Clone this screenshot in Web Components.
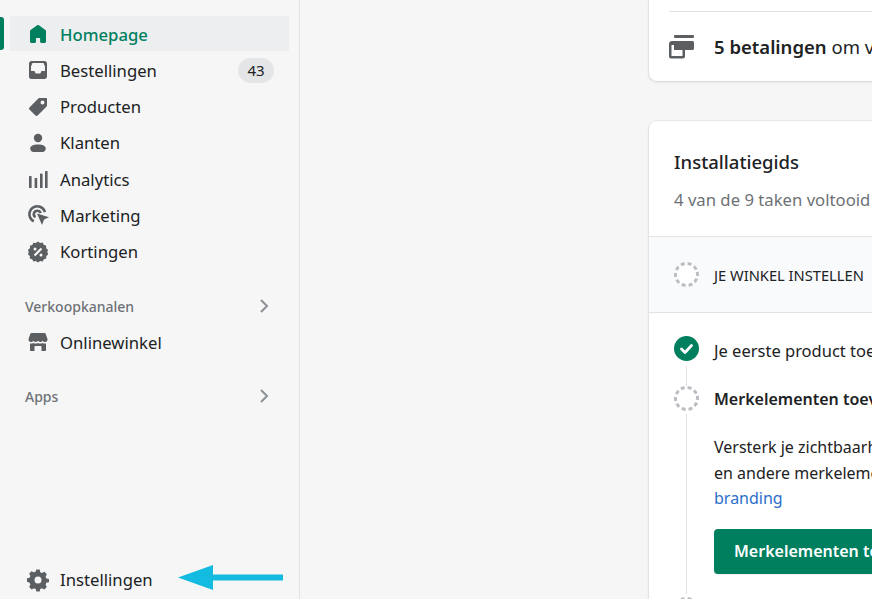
<!DOCTYPE html>
<html lang="nl">
<head>
<meta charset="utf-8">
<title>Homepage</title>
<style>
  html, body { margin: 0; height: 100%; overflow: hidden; }
  body { font-family: "Noto Sans", "Open Sans", sans-serif; color: #202223; background: #f6f6f7; }
</style>
</head>
<body>
<admin-shell>
  <admin-sidebar slot="sidebar"></admin-sidebar>
  <payment-card></payment-card>
  <setup-guide></setup-guide>
</admin-shell>

<script>
const ICONS = {
  home: `<path d="M18 7.3v10.2c0 .8-.7 1.500-1.500 1.500h-2.900c-.8 0-1.500-.7-1.500-1.500V14H8v3.500C8 18.300 7.300 19 6.500 19H3.500C2.700 19 2 18.300 2 17.500V7.300c0-.5.200-.9.600-1.200L9.200 1.300c.5-.4 1.200-.4 1.700 0l6.500 4.800c.4.300.6.700.6 1.200z"/>`,
  orders: `<path fill-rule="evenodd" d="M3.500 1h13C17.900 1 19 2.100 19 3.500v13c0 1.400-1.100 2.500-2.500 2.500h-13A2.500 2.500 0 0 1 1 16.500v-13C1 2.100 2.100 1 3.500 1zM4.500 3 3 6.500V11h3.500l1.200 2.500h4.600l1.200-2.500H17V6.500L15.500 3h-11z"/>`,
  tag: `<path fill-rule="evenodd" d="M18 1h-6.500c-.4 0-.8.200-1.100.4l-9 9c-.5.600-.5 1.500 0 2.100l6.100 6.100c.6.500 1.500.5 2.100 0l9-9c.2-.3.400-.7.400-1.100V2c0-.6-.4-1-1-1zm-3.500 6.500a2 2 0 1 1 0-4 2 2 0 0 1 0 4z"/>`,
  person: `<circle cx="10" cy="5" r="4.200"/><path d="M10 11.500c-4.800 0-7.800 1.500-7.800 4.100 0 1.900 1.400 3.400 3.300 3.400h9c1.900 0 3.300-1.500 3.300-3.400 0-2.600-3-4.100-7.800-4.100z"/>`,
  bars: `<rect x="1" y="7" width="2.600" height="12" rx=".6"/><rect x="6.600" y="9" width="2.600" height="10" rx=".6"/><rect x="12" y="4.500" width="2.600" height="14.500" rx=".6"/><rect x="17" y="2" width="2.600" height="17" rx=".6"/>`,
  target: `<path d="M9.200 0a9.200 9.200 0 0 0-3.900 17.500l1.100-2.400A6.600 6.600 0 1 1 15.700 7.600l2.400-.8A9.200 9.200 0 0 0 9.200 0z"/><path d="M9.200 4.500a4.700 4.700 0 0 0-2.300 8.800l1.200-2.300a2.200 2.200 0 1 1 3.300-2.500l2.400-.8A4.700 4.700 0 0 0 9.200 4.500z"/><path d="M9 8.600 21 12.300l-4.900 2.200-2.100 5.500z"/>`,
  discount: `<path fill-rule="evenodd" d="M10 -.5l2.100 1.500 2.500-.4 1.200 2.200 2.400.9-.1 2.500L20 7.800l-.7 2.200.9 2.400-2 1.500.1 2.500-2.400.8-1.200 2.200-2.500-.4L10 20.500 7.900 19.100l-2.500.4-1.200-2.200-2.400-.8.100-2.500L0 12.400.7 10 0 7.800l2-1.600-.1-2.500 2.400-.8L5.400.7l2.500.4L10-.5zM7 5.500a1.500 1.500 0 1 0 0 3 1.500 1.500 0 0 0 0-3zm6 6a1.500 1.500 0 1 0 0 3 1.500 1.500 0 0 0 0-3zM12.700 5.700 5.700 12.700l1.600 1.600 7-7-1.600-1.600z"/>`,
  store: `<path d="M3.500 1h13c.5 0 .9.300 1.100.700L19.500 7c.3 1.700-1 3-2.500 3-1 0-1.900-.5-2.400-1.300C14 9.500 13.100 10 12.200 10c-.9 0-1.700-.5-2.200-1.200-.5.700-1.300 1.200-2.200 1.200-.9 0-1.800-.5-2.400-1.300C4.900 9.500 4 10 3 10 1.500 10 .200 8.700.500 7l1.900-5.300c.2-.4.600-.7 1.100-.7z"/><path d="M2 11.500c.3.100.7.100 1 .100.9 0 1.700-.2 2.400-.7.700.5 1.500.7 2.400.7.800 0 1.600-.2 2.200-.7.600.5 1.400.7 2.200.7.900 0 1.700-.2 2.400-.7.700.5 1.500.7 2.400.7.300 0 .7 0 1-.1V18c0 .6-.4 1-1 1h-3.500v-4c0-.6-.4-1-1-1h-5c-.6 0-1 .4-1 1v4H3c-.6 0-1-.4-1-1v-6.500z"/>`,
  gear: `<path fill-rule="evenodd" d="M8.300-.5h3.400l.5 2.700c.6.200 1.200.4 1.700.8l2.500-1.200 2.400 2.400-1.200 2.500c.3.500.6 1.100.7 1.700l2.700.5v3.400l-2.700.5c-.1.600-.4 1.200-.7 1.700l1.200 2.500-2.400 2.400-2.500-1.200c-.5.300-1.100.6-1.700.7l-.5 2.700H8.300l-.5-2.700c-.6-.1-1.200-.4-1.700-.7l-2.500 1.200-2.400-2.400 1.200-2.500c-.3-.5-.6-1.100-.7-1.700L-1 11.700V8.300l2.700-.5c.1-.6.400-1.200.7-1.700L1.200 3.600l2.400-2.400 2.500 1.200c.5-.4 1.100-.6 1.700-.8L8.300-.5zM10 6.500a3.500 3.500 0 1 0 0 7 3.500 3.500 0 0 0 0-7z"/>`
};

class AdminShell extends HTMLElement {
  constructor() {
    super();
    this.attachShadow({ mode: "open" });
  }

  static get styles() {
    return /* css */ `
      :host { display: grid; grid-template-columns: 300px 1fr; height: 599px; overflow: hidden; }
      main { padding-left: 349px; display: flex; flex-direction: column; gap: 40px; overflow: hidden; min-width: 0; }
    `;
  }

  connectedCallback() {
    this.shadowRoot.innerHTML = /* html */ `
      <style>${AdminShell.styles}</style>
      <slot name="sidebar"></slot>
      <main><slot></slot></main>`;
  }
}

class NavItem extends HTMLElement {
  constructor() {
    super();
    this.attachShadow({ mode: "open" });
  }

  static get styles() {
    return /* css */ `
      :host { display: block; position: relative; height: 36.3px; font-size: 16.7px; color: #202223; }
      a { display: flex; align-items: center; gap: 12px; height: 35px; box-sizing: border-box; padding: 1px 15px 0 18px; margin: 0 10px; }
      svg { width: 20px; height: 20px; fill: #5c5f62; flex: none; overflow: visible; }
      span { flex: 1; white-space: nowrap; }
      b { font-weight: 400; font-size: 15px; background: #e4e5e7; border-radius: 13px; height: 25px; width: 36px; display: flex; align-items: center; justify-content: center; }
      :host([selected]) a { background: #edeef0; color: #007f5f; font-weight: 500; }
      :host([selected]) svg { fill: #007f5f; }
      :host([selected])::before { content: ""; position: absolute; left: 0; top: 1px; bottom: 2px; width: 4px; background: #007f5f; border-radius: 0 3px 3px 0; }
    `;
  }

  connectedCallback() {
    const badge = this.getAttribute("badge");
    this.shadowRoot.innerHTML = /* html */ `
      <style>${NavItem.styles}</style>
      <a>
        <svg viewBox="0 0 20 20">${ICONS[this.getAttribute("icon")]}</svg>
        <span><slot></slot></span>
        ${badge ? `<b>${badge}</b>` : ""}
      </a>`;
  }
}

class NavSection extends HTMLElement {
  constructor() {
    super();
    this.attachShadow({ mode: "open" });
  }

  static get styles() {
    return /* css */ `
      :host { display: flex; align-items: center; justify-content: space-between; height: 36px; padding: 0 30px 0 25px; font-size: 14px; font-weight: 500; color: #6d7175; }
      svg { width: 10px; height: 14px; fill: none; stroke: #8c9196; stroke-width: 2; }
    `;
  }

  connectedCallback() {
    this.shadowRoot.innerHTML = /* html */ `
      <style>${NavSection.styles}</style>
      <slot></slot>
      <svg viewBox="0 0 10 14"><path d="M2 1l6 6-6 6"/></svg>`;
  }
}

class AdminSidebar extends HTMLElement {
  constructor() {
    super();
    this.attachShadow({ mode: "open" });
  }

  static get styles() {
    return /* css */ `
      :host { display: flex; flex-direction: column; position: relative; box-sizing: border-box; height: 599px; padding-top: 16px; background: #f6f6f7; border-right: 1px solid #e1e3e5; }
      .section { margin-top: 18px; }
      .apps { margin-top: 18px; }
      .bottom { margin-top: auto; margin-bottom: 1px; }
      .arrow { position: absolute; left: 178px; top: 565px; width: 105px; height: 25px; fill: #12bbdf; }
    `;
  }

  connectedCallback() {
    this.shadowRoot.innerHTML = /* html */ `
      <style>${AdminSidebar.styles}</style>
      <nav-item icon="home" selected>Homepage</nav-item>
      <nav-item icon="orders" badge="43">Bestellingen</nav-item>
      <nav-item icon="tag">Producten</nav-item>
      <nav-item icon="person">Klanten</nav-item>
      <nav-item icon="bars">Analytics</nav-item>
      <nav-item icon="target">Marketing</nav-item>
      <nav-item icon="discount">Kortingen</nav-item>
      <nav-section class="section">Verkoopkanalen</nav-section>
      <nav-item icon="store">Onlinewinkel</nav-item>
      <nav-section class="apps">Apps</nav-section>
      <nav-item class="bottom" icon="gear">Instellingen</nav-item>
      <svg class="arrow" viewBox="0 0 105 25"><path d="M0 12.500 35 0v9.500h70v6H35V25z"/></svg>`;
  }
}

class PaymentCard extends HTMLElement {
  constructor() {
    super();
    this.attachShadow({ mode: "open" });
  }

  static get styles() {
    return /* css */ `
      :host { display: block; flex: none; width: 600px; height: 81px; box-sizing: border-box; background: #fff; border-radius: 0 0 8px 8px; padding: 0 20px; box-shadow: 0 0 0 1px rgba(63,63,68,.05), 0 1px 3px rgba(63,63,68,.15); font-size: 18.500px; }
      .line { height: 11px; border-bottom: 1px solid #e1e3e5; }
      .row { display: flex; align-items: center; gap: 20px; height: 69px; white-space: nowrap; }
      svg { width: 25px; height: 24px; fill: #5c5f62; flex: none; }
      strong { font-weight: 600; }
      span { color: #202223; }
    `;
  }

  connectedCallback() {
    this.shadowRoot.innerHTML = /* html */ `
      <style>${PaymentCard.styles}</style>
      <div class="line"></div>
      <div class="row">
        <svg viewBox="0 0 25 24"><rect x="5" y="0" width="20" height="3" rx="1"/><path fill-rule="evenodd" d="M3 6h20.500c.8 0 1.500.7 1.500 1.500v6c0 .8-.7 1.500-1.500 1.500H16v6.500c0 1.100-.9 2-2 2H2c-1.100 0-2-.9-2-2V9c0-1.700 1.300-3 3-3zM2.500 10v11h11v-6H5v-5H2.500z"/></svg>
        <span><strong>5 betalingen</strong> om vast te leggen</span>
      </div>`;
  }
}

class StepStatus extends HTMLElement {
  constructor() {
    super();
    this.attachShadow({ mode: "open" });
  }

  static get styles() {
    return /* css */ `
      :host { display: block; width: 25px; height: 25px; flex: none; }
      svg { display: block; width: 25px; height: 25px; }
    `;
  }

  connectedCallback() {
    const done = this.hasAttribute("done");
    this.shadowRoot.innerHTML = /* html */ `
      <style>${StepStatus.styles}</style>
      <svg viewBox="0 0 25 25">
        ${done
          ? `<circle cx="12.500" cy="12.500" r="12.500" fill="#007f5f"/><path d="M7.500 13l3.500 3.500 6.500-7" fill="none" stroke="#fff" stroke-width="2.800" stroke-linecap="round" stroke-linejoin="round"/>`
          : `<circle cx="12.500" cy="12.500" r="11" fill="#fff" stroke="#babec3" stroke-width="3" stroke-dasharray="4 2.910" transform="rotate(-14 12.500 12.500)"/>`}
      </svg>`;
  }
}

class SetupGuide extends HTMLElement {
  constructor() {
    super();
    this.attachShadow({ mode: "open" });
  }

  static get styles() {
    return /* css */ `
      :host { display: block; flex: none; width: 600px; box-sizing: border-box; background: #fff; border-radius: 8px 8px 0 0; box-shadow: 0 0 0 1px rgba(63,63,68,.05), 0 1px 3px rgba(63,63,68,.15); white-space: nowrap; }
      header { padding: 28px 25px 24px; height: 115px; box-sizing: border-box; }
      h2 { margin: 0; font-size: 18.500px; line-height: 26px; font-weight: 500; }
      header p { margin: 13px 0 0; font-size: 16.700px; line-height: 24px; color: #6d7175; }
      .group { display: flex; align-items: center; gap: 15px; height: 77px; padding: 0 25px 1px; box-sizing: border-box; background: #f9fafb; border-top: 1px solid #e1e3e5; border-bottom: 1px solid #e1e3e5; font-size: 14.700px; color: #202223; }
      .group span { padding-top: 1px; }
      .steps { padding: 23px 25px 0; position: relative; }
      .step { display: flex; gap: 15px; position: relative; }
      .step + .step { margin-top: 23px; }
      .step .rail { position: absolute; left: 12px; width: 1px; background: #dfe1e3; }
      .first .rail { top: 30px; height: 20px; }
      .open .rail { top: 28px; height: 180px; }
      .body { font-size: 16px; color: #202223; line-height: 25px; }
      .first .body { padding-top: 2px; font-size: 16.500px; }
      .open .body { padding-top: 1px; }
      .body b { display: block; font-weight: 600; color: #202223; }
      .body p { margin: 23px 0 0; line-height: 25.500px; }
      a { color: #2c6ecb; }
      button { display: block; margin-top: 17px; height: 45px; padding: 0 20px; background: #007f5f; color: #fff; border: 0; border-radius: 4px; font: 600 16px "Noto Sans", "Open Sans", sans-serif; box-shadow: 0 1px 0 rgba(0,0,0,.05); }
      .next { margin-top: 22px; }
    `;
  }

  connectedCallback() {
    this.shadowRoot.innerHTML = /* html */ `
      <style>${SetupGuide.styles}</style>
      <header>
        <h2>Installatiegids</h2>
        <p>4 van de 9 taken voltooid</p>
      </header>
      <div class="group"><step-status></step-status><span>JE WINKEL INSTELLEN</span></div>
      <div class="steps">
        <div class="step first">
          <step-status done></step-status><div class="rail"></div>
          <div class="body">Je eerste product toevoegen</div>
        </div>
        <div class="step open">
          <step-status></step-status><div class="rail"></div>
          <div class="body">
            <b>Merkelementen toevoegen</b>
            <p>Versterk je zichtbaarheid met een logo, kleuren<br>en andere merkelementen voor je<br><a>branding</a></p>
            <button>Merkelementen toevoegen</button>
          </div>
        </div>
        <div class="step next"><step-status></step-status></div>
      </div>`;
  }
}

customElements.define("admin-shell", AdminShell);
customElements.define("nav-item", NavItem);
customElements.define("nav-section", NavSection);
customElements.define("admin-sidebar", AdminSidebar);
customElements.define("payment-card", PaymentCard);
customElements.define("step-status", StepStatus);
customElements.define("setup-guide", SetupGuide);
</script>
</body>
</html>
